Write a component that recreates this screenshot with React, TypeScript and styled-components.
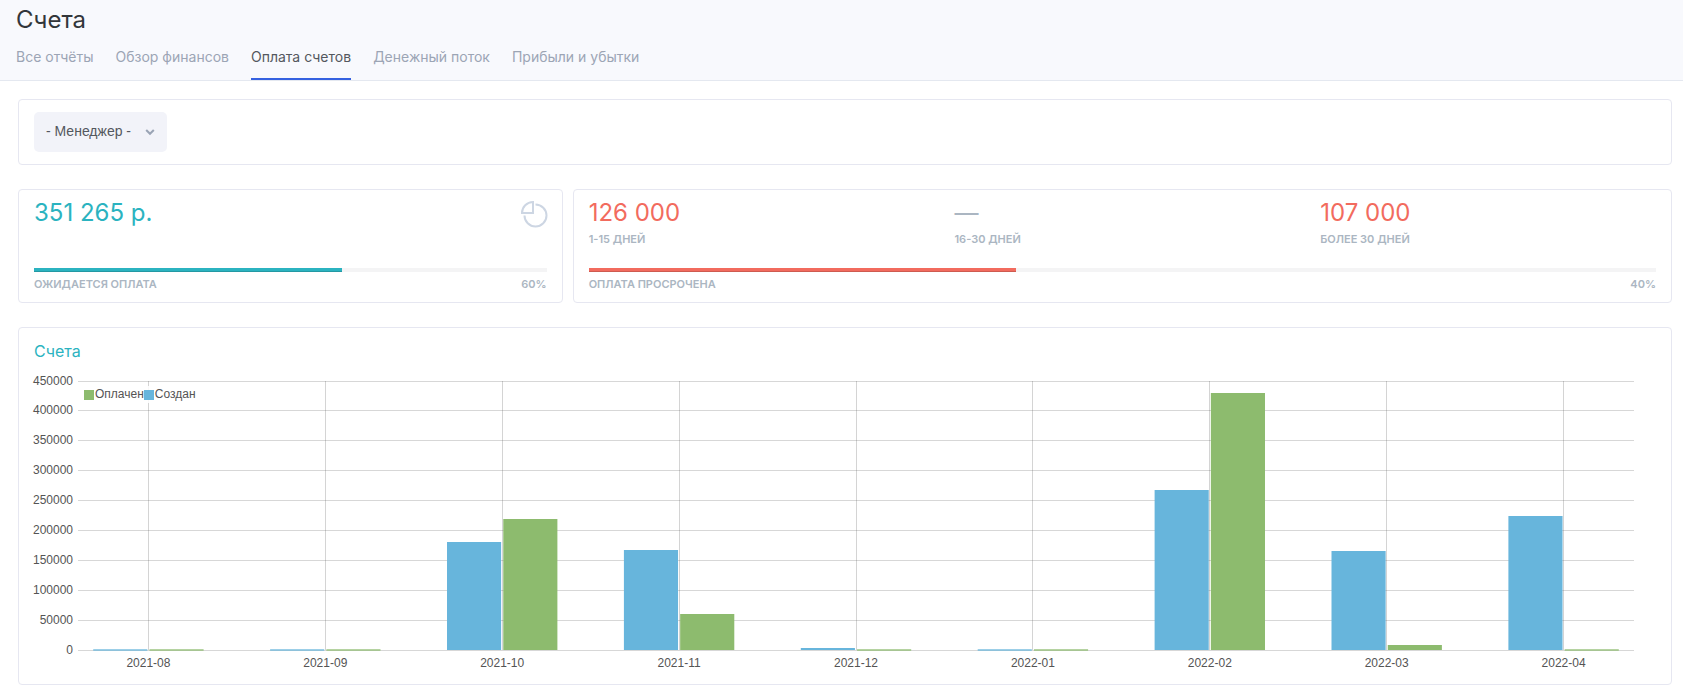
import React from "react";
import styled, { createGlobalStyle } from "styled-components";

const teal = "#2bb3c0";
const red = "#f26b5e";
const blue = "#67b5dc";
const green = "#8dbb6e";
const muted = "#abb6c2";

const GlobalStyle = createGlobalStyle`
  *, *::before, *::after { box-sizing: border-box; }
  body {
    margin: 0;
    background: #fff;
    font-family: Inter, "Liberation Sans", sans-serif;
    font-size: 14px;
    color: #32363a;
  }
`;

const Header = styled.header`
  padding: 4px 16px 0;
  background: #f8f9fd;
  border-bottom: 1px solid #e4e8f0;
`;

const PageTitle = styled.h1`
  margin: 0;
  font-size: 24px;
  line-height: 32px;
  font-weight: 400;
`;

const Tabs = styled.nav`
  display: flex;
  flex-wrap: wrap;
  gap: 22px;
  margin-top: 11px;
`;

const Tab = styled.a<{ $active?: boolean }>`
  padding-bottom: 11px;
  border-bottom: 2px solid ${(p) => (p.$active ? "#3561e0" : "transparent")};
  color: ${(p) => (p.$active ? "#54585e" : "#9ca5b5")};
  line-height: 20px;
  text-decoration: none;
`;

const Content = styled.main`
  display: flex;
  flex-direction: column;
  gap: 24px;
  padding: 18px 11px 10px 18px;
`;

const Card = styled.section`
  padding: 15px;
  border: 1px solid #e6e7f1;
  border-radius: 4px;
  background: #fff;
`;

const FilterCard = styled(Card)`
  padding: 12px 15px;
`;

const SelectWrap = styled.label`
  position: relative;
  display: inline-flex;
  align-items: center;
  vertical-align: top;
`;

const Select = styled.select`
  appearance: none;
  width: 133px;
  height: 40px;
  padding: 0 32px 2px 12px;
  border: 0;
  border-radius: 5px;
  background: #f2f3f9;
  color: #54585e;
  font: 14px "Liberation Sans", Arial, sans-serif;
`;

const Chevron = styled.svg`
  position: absolute;
  right: 12px;
  pointer-events: none;
`;

const Summary = styled.div`
  display: grid;
  grid-template-columns: 1fr 2fr;
  margin: 0 -5px;
`;

const SummaryCard = styled(Card)`
  display: flex;
  flex-direction: column;
  margin: 0 5px;
  padding: 7px 15px 8px;
`;

const Figures = styled.div`
  display: flex;
  flex: 1;
  justify-content: space-between;
  min-height: 71px;
`;

const FigureGrid = styled.div`
  display: grid;
  grid-template-columns: repeat(3, 1fr);
  min-height: 71px;
  margin: 0 -15px;
`;

const Figure = styled.div`
  padding: 0 15px;
`;

const Amount = styled.div<{ $color: string }>`
  color: ${(p) => p.$color};
  font-size: 24px;
  line-height: 32px;
  font-weight: 400;
`;

const Caption = styled.div`
  color: ${muted};
  font-size: 11px;
  line-height: 20px;
  font-weight: 600;
  text-transform: uppercase;
`;

const CaptionRow = styled.div`
  display: flex;
  justify-content: space-between;
  padding-top: 2px;
`;

const PieIcon = styled.svg`
  margin-top: 3px;
  overflow: visible;
`;

const Track = styled.div`
  height: 4px;
  background: #f4f4f5;
`;

const Fill = styled.div<{ $color: string }>`
  height: 4px;
  background: ${(p) => p.$color};
  box-shadow: inset 0 -1px 0 rgba(0, 0, 0, 0.15);
`;

const ChartTitle = styled.h2`
  margin: -4px 0 0;
  color: ${teal};
  font-size: 16px;
  line-height: 24px;
  font-weight: 400;
`;

const ChartArea = styled.div`
  position: relative;
  margin-top: 7px;
  font-family: "Liberation Sans", Arial, sans-serif;
  font-size: 12px;
`;

const ChartSvg = styled.svg`
  display: block;
  width: 100%;
  height: 299px;
  overflow: visible;
  fill: #545454;
`;

const Plot = styled.svg`
  width: calc(100% - 66px);
  overflow: visible;
`;

const Legend = styled.div`
  position: absolute;
  top: 16px;
  left: 50px;
  display: flex;
  align-items: flex-start;
  height: 17px;
  background: rgba(255, 255, 255, 0.85);
  color: #545454;
`;

const LegendItem = styled.span<{ $color: string }>`
  display: flex;
  align-items: flex-start;
  gap: 1px;
  line-height: 16px;

  &::before {
    content: "";
    width: 10px;
    height: 10px;
    margin-top: 4px;
    background: ${(p) => p.$color};
  }
`;

const months = [
  { label: "2021-08", created: 0, paid: 0 },
  { label: "2021-09", created: 0, paid: 0 },
  { label: "2021-10", created: 180500, paid: 219000 },
  { label: "2021-11", created: 167000, paid: 60500 },
  { label: "2021-12", created: 3000, paid: 0 },
  { label: "2022-01", created: 0, paid: 0 },
  { label: "2022-02", created: 266000, paid: 428000 },
  { label: "2022-03", created: 165000, paid: 8500 },
  { label: "2022-04", created: 223500, paid: 0 },
];

const ticks = [450000, 400000, 350000, 300000, 250000, 200000, 150000, 100000, 50000, 0];

// Plot geometry: vertical axis in pixels, horizontal axis in category units.
const plotTop = 11;
const baseline = 280;
const tickStep = 30;
const edge = 0.398;
const barWidth = 0.306;
const barOffset = 0.006;
const span = months.length - 1 + edge * 2;
const xPct = (v: number) => `${((v + edge) / span) * 100}%`;
const yPos = (v: number) => Math.max(plotTop, Math.round(baseline - (v / 50000) * tickStep));

function Bar({ start, value, color }: { start: number; value: number; color: string }) {
  const width = `${(barWidth / span) * 100}%`;
  if (value === 0) {
    return <rect x={xPct(start)} y={baseline - 1} width={width} height={2} fill={color} fillOpacity={0.65} />;
  }
  const y = yPos(value);
  return <rect x={xPct(start)} y={y} width={width} height={baseline - y} fill={color} />;
}

function Chart() {
  return (
    <ChartArea>
      <ChartSvg role="img" aria-label="Счета по месяцам">
        {ticks.map((t) => (
          <text key={t} x={39} y={yPos(t) + 4} textAnchor="end">
            {t}
          </text>
        ))}
        <Plot x={44} y={0} height={299}>
          {ticks.map((t) => (
            <rect key={t} x="0" y={yPos(t)} width="100%" height={1} fill="#545454" fillOpacity={0.23} />
          ))}
          {months.map((m, i) => (
            <line
              key={m.label}
              x1={xPct(i)}
              x2={xPct(i)}
              y1={plotTop}
              y2={baseline}
              stroke="#545454"
              strokeOpacity={0.25}
              shapeRendering="crispEdges"
            />
          ))}
          {months.map((m, i) => (
            <g key={m.label}>
              <Bar start={i - barWidth - barOffset} value={m.created} color={blue} />
              <Bar start={i + barOffset} value={m.paid} color={green} />
              <text x={xPct(i)} y={297} textAnchor="middle">
                {m.label}
              </text>
            </g>
          ))}
        </Plot>
      </ChartSvg>
      <Legend>
        <LegendItem $color={green}>Оплачен</LegendItem>
        <LegendItem $color={blue}>Создан</LegendItem>
      </Legend>
    </ChartArea>
  );
}

function Progress({ label, value, color }: { label: string; value: number; color: string }) {
  return (
    <>
      <Track role="progressbar" aria-label={label} aria-valuenow={value}>
        <Fill $color={color} style={{ width: `${value}%` }} />
      </Track>
      <CaptionRow>
        <Caption>{label}</Caption>
        <Caption>{value}%</Caption>
      </CaptionRow>
    </>
  );
}

const tabs = ["Все отчёты", "Обзор финансов", "Оплата счетов", "Денежный поток", "Прибыли и убытки"];

const overdue = [
  { amount: "126 000", label: "1-15 дней", color: red },
  { amount: "—", label: "16-30 дней", color: muted },
  { amount: "107 000", label: "Более 30 дней", color: red },
];

export default function App() {
  return (
    <>
      <GlobalStyle />
      <Header>
        <PageTitle>Счета</PageTitle>
        <Tabs>
          {tabs.map((t) => (
            <Tab key={t} href="#" $active={t === "Оплата счетов"}>
              {t}
            </Tab>
          ))}
        </Tabs>
      </Header>
      <Content>
        <FilterCard>
          <SelectWrap>
            <Select aria-label="Менеджер">
              <option>- Менеджер -</option>
            </Select>
            <Chevron width="10" height="8" viewBox="0 0 10 8" fill="none" stroke="#9aa4b5" strokeWidth="2">
              <path d="M1.2 2L5 5.8L8.8 2" />
            </Chevron>
          </SelectWrap>
        </FilterCard>
        <Summary>
          <SummaryCard>
            <Figures>
              <Amount $color={teal}>351 265 р.</Amount>
              <PieIcon width="27" height="27" viewBox="-1 -1 27 27" fill="none" stroke="#cdd6e3" strokeWidth="2">
                <path d="M12 1V12H1A11 11 0 0 1 12 1Z" />
                <path d="M14.5 3.5A11 11 0 1 1 3.5 14.5" />
              </PieIcon>
            </Figures>
            <Progress label="Ожидается оплата" value={60} color={teal} />
          </SummaryCard>
          <SummaryCard>
            <FigureGrid>
              {overdue.map((o) => (
                <Figure key={o.label}>
                  <Amount $color={o.color}>{o.amount}</Amount>
                  <Caption>{o.label}</Caption>
                </Figure>
              ))}
            </FigureGrid>
            <Progress label="Оплата просрочена" value={40} color={red} />
          </SummaryCard>
        </Summary>
        <Card>
          <ChartTitle>Счета</ChartTitle>
          <Chart />
        </Card>
      </Content>
    </>
  );
}
